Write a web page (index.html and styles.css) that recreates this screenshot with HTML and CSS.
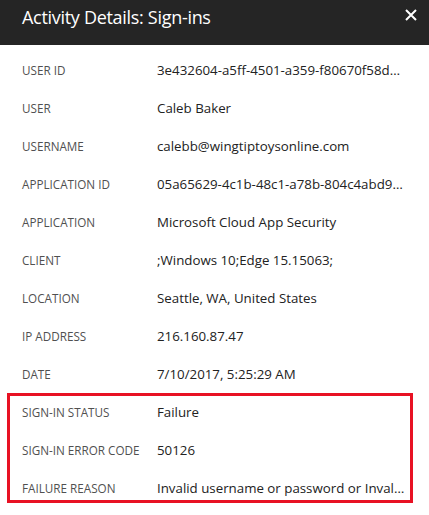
FILE: index.html
```html
<!DOCTYPE html>
<html lang="en">
<head>
<meta charset="utf-8">
<title>Activity Details: Sign-ins</title>
<link rel="stylesheet" href="styles.css">
</head>
<body>
<div class="panel">
  <header class="header">
    <h1 class="title">Activity Details: Sign-ins</h1>
    <button class="close" aria-label="Close">
      <svg width="12" height="12" viewBox="0 0 12 12"><path d="M1 1 L11 11 M11 1 L1 11" stroke="#fff" stroke-width="2" fill="none"/></svg>
    </button>
  </header>
  <div class="details">
    <div class="row"><div class="label">User ID</div><div class="value">3e432604-a5ff-4501-a359-f80670f58d0a1c</div></div>
    <div class="row"><div class="label">User</div><div class="value">Caleb Baker</div></div>
    <div class="row"><div class="label">Username</div><div class="value">calebb@wingtiptoysonline.com</div></div>
    <div class="row"><div class="label">Application ID</div><div class="value">05a65629-4c1b-48c1-a78b-804c4abd9f2e</div></div>
    <div class="row"><div class="label">Application</div><div class="value">Microsoft Cloud App Security</div></div>
    <div class="row"><div class="label">Client</div><div class="value">;Windows 10;Edge 15.15063;</div></div>
    <div class="row"><div class="label">Location</div><div class="value">Seattle, WA, United States</div></div>
    <div class="row"><div class="label">IP Address</div><div class="value">216.160.87.47</div></div>
    <div class="row"><div class="label">Date</div><div class="value">7/10/2017, 5:25:29 AM</div></div>
    <div class="highlight">
      <div class="highlight-rows">
        <div class="row"><div class="label">Sign-in Status</div><div class="value">Failure</div></div>
        <div class="row"><div class="label">Sign-in Error Code</div><div class="value">50126</div></div>
        <div class="row"><div class="label">Failure Reason</div><div class="value">Invalid username or password or Invalid on-premise username or password.</div></div>
      </div>
    </div>
  </div>
</div>
</body>
</html>
```
FILE: styles.css
```css
html, body {
  margin: 0;
  padding: 0;
  background: #fff;
}
body {
  font-family: "Open Sans", "Noto Sans", sans-serif;
  width: 429px;
  height: 515px;
  overflow: hidden;
}
.header {
  height: 45px;
  background: #252525;
  display: flex;
  align-items: flex-start;
  justify-content: space-between;
  padding: 0 6px 0 22px;
  box-sizing: border-box;
}
.title {
  margin: 0;
  font-weight: 400;
  font-size: 18px;
  line-height: 34px;
  color: #fff;
  letter-spacing: -0.3px;
}
.close {
  background: none;
  border: 0;
  padding: 9px 6px 0 0;
  margin: 0;
  line-height: 0;
}
.details {
  padding-top: 6px;
}
.row {
  display: flex;
  align-items: center;
  height: 38px;
  padding-left: 22px;
}
.label {
  width: 135px;
  flex: none;
  font-size: 11.7px;
  text-transform: uppercase;
  color: #505050;
}
.value {
  width: 250px;
  font-size: 13.3px;
  color: #222;
  white-space: nowrap;
  overflow: hidden;
  text-overflow: ellipsis;
}
.highlight {
  margin: 0 16px 0 7px;
  border: 3px solid #e81123;
}
.highlight-rows {
  margin: -3px 0 -7px;
}
.highlight .row {
  padding-left: 12px;
}
```
